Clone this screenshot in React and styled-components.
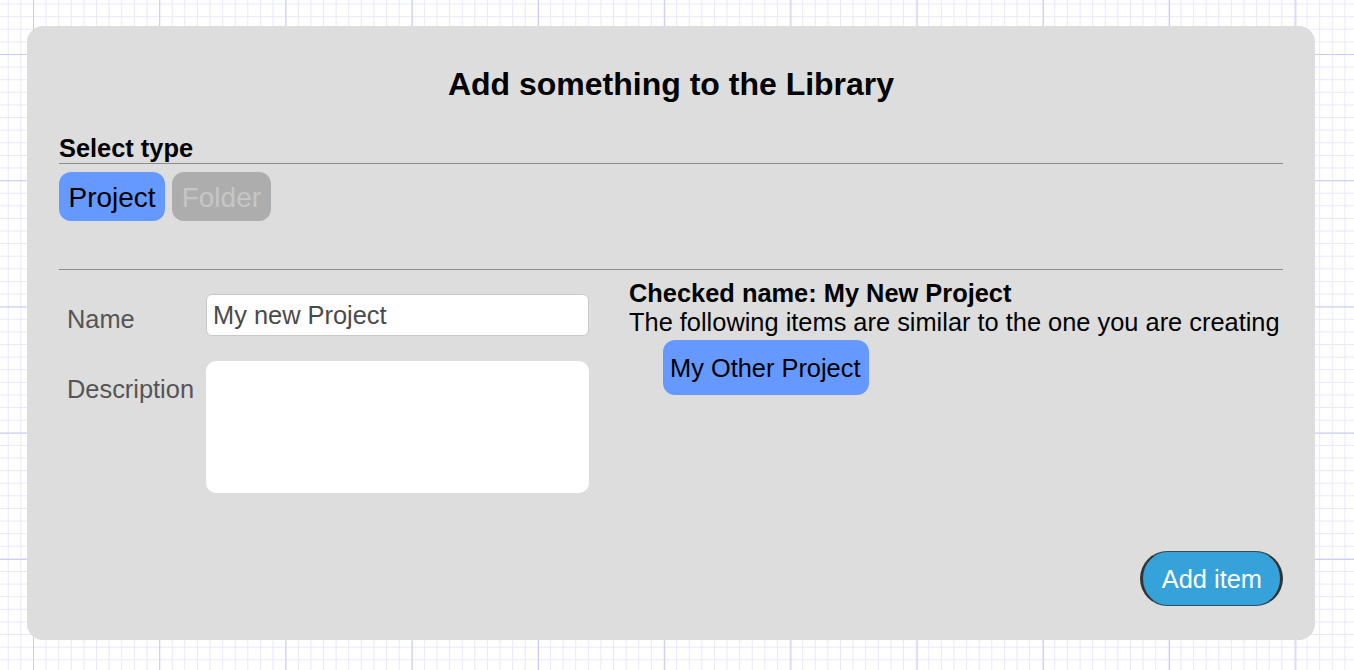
import React from 'react';
import styled, { createGlobalStyle } from 'styled-components';

const GlobalStyle = createGlobalStyle`
  html, body {
    margin: 0;
    height: 100%;
  }
  body {
    font-family: "Liberation Sans", Arial, Helvetica, sans-serif;
    background-color: #ffffff;
    background-image:
      linear-gradient(90deg, #c9c9f5 1px, transparent 1px),
      linear-gradient(#c9c9f5 1px, transparent 1px),
      linear-gradient(90deg, #e8e8fb 1px, transparent 1px),
      linear-gradient(#e8e8fb 1px, transparent 1px);
    background-size: 126.24px 126.24px, 126.24px 126.24px, 12.624px 12.624px, 12.624px 12.624px;
    background-position: 33px 54px;
  }
`;

const Page = styled.div`
  padding: 26px 39px 0 27px;
`;

const Card = styled.div`
  background: #dddddd;
  border-radius: 16px;
  padding: 40px 32px 34px 32px;
  display: flex;
  flex-direction: column;
`;

const Title = styled.h2`
  margin: 0;
  text-align: center;
  font-size: 32px;
  line-height: 37px;
  font-weight: 700;
  color: #000;
`;

const SectionTitle = styled.h3`
  margin: 30.5px 0 0;
  font-size: 25.4px;
  font-weight: 700;
  color: #000;
  border-bottom: 1.5px solid #8c8c8c;
`;

const TypeRow = styled.div`
  display: flex;
  gap: 7px;
  margin-top: 8px;
`;

const TypeButton = styled.button`
  font-family: inherit;
  font-size: 28px;
  line-height: 32px;
  padding: 10.5px 9.5px 6.5px;
  border: none;
  border-radius: 12px;
  background: ${p => (p.$active ? '#6699ff' : '#adadad')};
  color: ${p => (p.$active ? '#000' : '#c6c6c6')};
  cursor: pointer;
`;

const Divider = styled.hr`
  margin: 48px 0 0;
  border: none;
  border-top: 1.5px solid #8c8c8c;
`;

const Lower = styled.div`
  display: flex;
  gap: 40px;
  align-items: flex-start;
`;

const Form = styled.div`
  display: grid;
  grid-template-columns: 147px 383px;
  row-gap: 24.7px;
  margin-top: 24px;
`;

const Label = styled.label`
  padding-left: 8px;
  padding-top: ${p => p.$offset}px;
  font-size: 25.4px;
  color: #555;
`;

const TextInput = styled.input`
  box-sizing: border-box;
  height: 42.5px;
  width: 100%;
  margin: 0;
  padding: 1px 6px 0;
  border: 1px solid #c9c9c9;
  border-radius: 6px;
  background: #fff;
  font-family: inherit;
  font-size: 25.4px;
  color: #4a4a4a;
  outline: none;
`;

const TextArea = styled.textarea`
  box-sizing: border-box;
  height: 132px;
  width: 100%;
  margin: 0;
  border: none;
  border-radius: 10px;
  background: #fff;
  resize: none;
  font-family: inherit;
  font-size: 25.4px;
  outline: none;
`;

const Similar = styled.div`
  flex: 1;
  padding-top: 9.5px;
  font-size: 25.4px;
  color: #000;
`;

const CheckedName = styled.div`
  font-weight: 700;
`;

const SimilarList = styled.div`
  display: flex;
  flex-direction: column;
  align-items: flex-start;
  margin: 2.5px 0 0 33.5px;
`;

const SimilarItem = styled.div`
  background: #6699ff;
  border-radius: 12px;
  padding: 14px 8.5px 12.6px 7.5px;
  line-height: 29.2px;
`;

const Footer = styled.div`
  display: flex;
  justify-content: flex-end;
  margin-top: 58.7px;
`;

const AddButton = styled.button`
  font-family: inherit;
  font-size: 25.4px;
  line-height: 29.2px;
  height: 54.5px;
  padding: 1px 18px 0 19px;
  border-style: solid;
  border-width: 1px 3px;
  border-color: #2f4c5c #333 #2f4c5c #333;
  border-radius: 28px;
  background: #36a2da;
  color: #fff;
  cursor: pointer;
`;

export default function App() {
  return (
    <>
      <GlobalStyle />
      <Page>
        <Card>
          <Title>Add something to the Library</Title>
          <SectionTitle>Select type</SectionTitle>
          <TypeRow>
            <TypeButton $active>Project</TypeButton>
            <TypeButton>Folder</TypeButton>
          </TypeRow>
          <Divider />
          <Lower>
            <Form>
              <Label $offset={11.5}>Name</Label>
              <TextInput defaultValue="My new Project" />
              <Label $offset={14.5}>Description</Label>
              <TextArea />
            </Form>
            <Similar>
              <CheckedName>Checked name: My New Project</CheckedName>
              <div>The following items are similar to the one you are creating</div>
              <SimilarList>
                <SimilarItem>My Other Project</SimilarItem>
              </SimilarList>
            </Similar>
          </Lower>
          <Footer>
            <AddButton>Add item</AddButton>
          </Footer>
        </Card>
      </Page>
    </>
  );
}
